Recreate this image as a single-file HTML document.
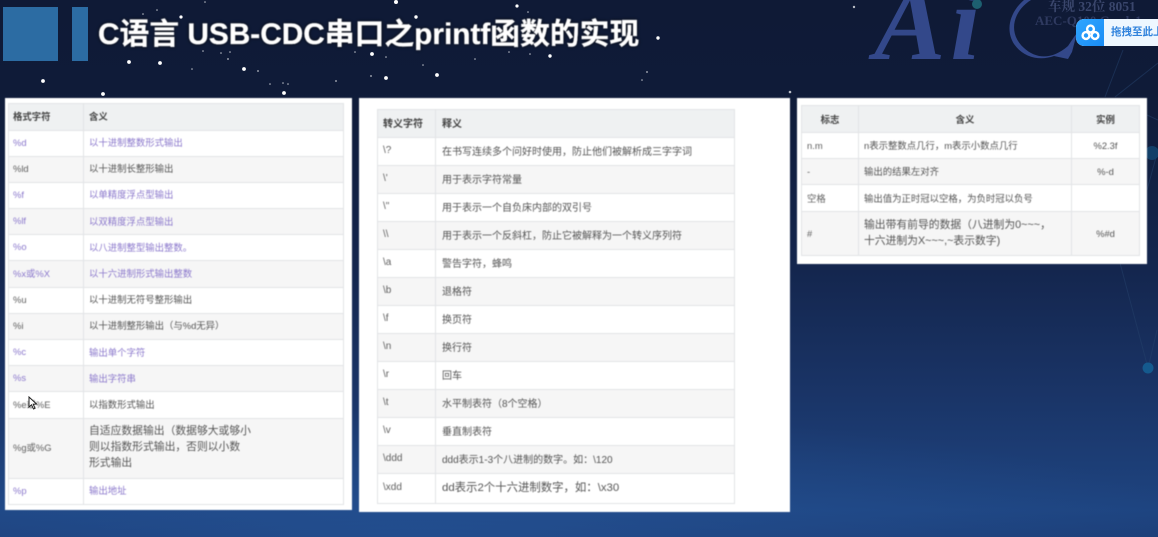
<!DOCTYPE html>
<html lang="zh">
<head>
<meta charset="utf-8">
<style>
html,body{margin:0;padding:0;width:1158px;height:537px;overflow:hidden;background:#101b38}
body{position:relative;font-family:"Liberation Sans","Noto Sans CJK SC",sans-serif}
.bg{position:absolute;left:0;top:0;width:1158px;height:537px;background:
radial-gradient(ellipse 800px 130px at 420px 540px,rgba(40,90,160,.55),rgba(40,90,160,0) 100%),
linear-gradient(180deg,#0f1a36 0,#0f1b38 90px,#14264e 270px,#1a3568 400px,#1e4480 510px,#1c3e78 537px)}
svg.deco{position:absolute;left:0;top:0}
.blk{position:absolute;background:#2c6ca3}
.title{position:absolute;left:98px;top:14px;font-size:29.8px;line-height:42px;font-weight:700;color:#fff;white-space:nowrap;text-shadow:0 0 3px #000;-webkit-text-stroke:.3px #fff;filter:blur(.4px)}
.panel{position:absolute;background:#fff;filter:blur(.5px)}
table{position:absolute;border-collapse:collapse;table-layout:fixed;color:#555;font-size:9.4px;background:#fff}
td,th{border:1px solid #e2e4e6;padding:0 0 0 5px;text-align:left;font-weight:400;overflow:hidden;white-space:nowrap}
th{background:#eff1f2;font-weight:700;color:#444}
tr:nth-child(odd) td{background:#f6f6f6}
tr:first-child th{background:#eff1f2}
.p,.p td{color:#8b78cc}
tr:nth-child(odd) td.p{color:#8b78cc}
#t1 tr.even td{background:#fff}
#t1 tr.odd td{background:#f6f6f6}
#t2 td:first-child,#t1 td:first-child,#t3 td:first-child{color:#5f5f5f}
#t1 td.p:first-child{color:#8b78cc}
#t1 td,#t1 th,#t2 td,#t2 th{padding-bottom:2px}
#t1 td:first-child,#t1 th:first-child{padding-left:4px}
#t1 td:nth-child(2),#t1 th:nth-child(2){padding-left:5.5px}
#t2 td:nth-child(2),#t2 th:nth-child(2){padding-left:6px}
.c{text-align:center;padding:0}
.widget{position:absolute;left:1076px;top:19px;width:120px;height:27px;background:#eef7ff;border-radius:8px;overflow:hidden;filter:blur(.3px)}
.widget i{position:absolute;left:0;top:0;width:28px;height:27px;background:linear-gradient(135deg,#30a6ff,#1a8cf5);border-radius:8px 0 0 8px}
.widget span{position:absolute;left:35px;top:6px;font-size:10.5px;line-height:15px;font-weight:700;color:#2f82dc;white-space:nowrap}
.lg{position:absolute;white-space:nowrap;font-family:"Liberation Serif","Noto Serif CJK SC",serif;font-weight:700}
</style>
</head>
<body>
<div class="bg"></div>

<svg class="deco" width="1158" height="537" viewBox="0 0 1158 537">
<g fill="#fff">
<circle cx="396" cy="2" r="2"/><circle cx="517" cy="6" r="1.6"/><circle cx="181" cy="17" r="1.6"/><circle cx="416" cy="17" r="1.7"/>
<circle cx="129" cy="62" r="1.9"/><circle cx="160" cy="63" r="1.9"/><circle cx="244" cy="69" r="1.9"/><circle cx="43" cy="81" r="1.9"/>
<circle cx="103" cy="94" r="1.9"/><circle cx="284" cy="93" r="1.9"/><circle cx="372" cy="54" r="1.9"/><circle cx="386" cy="78" r="1.9"/>
<circle cx="437" cy="75" r="1.9"/><circle cx="550" cy="56" r="1.7"/><circle cx="658" cy="38" r="1.7"/>
<g opacity=".7">
<circle cx="143" cy="14" r=".8"/><circle cx="157" cy="10" r=".8"/><circle cx="192" cy="69" r=".8"/><circle cx="258" cy="71" r=".9"/>
<circle cx="228" cy="59" r=".9"/><circle cx="203" cy="51" r=".8"/><circle cx="221" cy="53" r=".8"/><circle cx="230" cy="52" r=".8"/>
<circle cx="270" cy="84" r=".8"/><circle cx="283" cy="83" r=".8"/><circle cx="288" cy="84" r=".8"/><circle cx="336" cy="81" r=".9"/>
<circle cx="371" cy="76" r=".9"/><circle cx="423" cy="65" r=".8"/><circle cx="475" cy="59" r=".8"/><circle cx="509" cy="52" r=".8"/>
<circle cx="530" cy="54" r=".8"/><circle cx="647" cy="72" r=".9"/><circle cx="642" cy="80" r=".8"/><circle cx="528" cy="12" r=".8"/>
<circle cx="386" cy="57" r=".8"/><circle cx="355" cy="52" r=".8"/><circle cx="205" cy="2" r=".8"/><circle cx="854" cy="7" r="1.2"/><circle cx="790" cy="92" r="1.3"/>
</g>
</g>
<g stroke="#24406a" stroke-width="1" fill="none" opacity=".55">
<path d="M1123 50L1105 97"/><path d="M1158 63L1115 97"/>
<path d="M1120 263L1148 368"/><path d="M1157 330L1148 368"/>
<path d="M1147 115L1158 120"/><path d="M1147 190L1158 150"/>
</g>
<circle cx="1148" cy="368" r="5.5" fill="#155a8e"/>
<circle cx="1152" cy="153" r="7" fill="#123f68"/>
<circle cx="977" cy="4" r="5" fill="#1d5f70"/>
<path d="M1031 0C1012 12 1008 34 1024 48C1036 59 1052 60 1068 46L1074 37L1077 33L1072 52L1068 59L1054 56C1040 61 1024 58 1014 44C1004 28 1012 10 1024 0Z" fill="#33488a"/>
</svg>

<div class="lg" style="left:874px;top:-17px;font-size:107px;line-height:82px;font-style:italic;color:#33488a;letter-spacing:5px">Ai</div>
<div class="lg" style="left:1048px;top:-1px;font-size:13.5px;line-height:16px;color:#3a466c">车规 32位 8051</div>
<div class="lg" style="left:1035px;top:13px;font-size:13px;line-height:15px;color:#2f3a60">AEC-Q100 Grade1</div>

<div class="blk" style="left:3px;top:7px;width:55px;height:54px"></div>
<div class="blk" style="left:72px;top:7px;width:16px;height:54px"></div>
<div class="title">C语言 USB-CDC串口之printf函数的实现</div>

<div class="widget"><i></i>
<svg style="position:absolute;left:5px;top:4px" width="19" height="19" viewBox="0 0 19 19" fill="none" stroke="#fff" stroke-width="2.4"><circle cx="9.5" cy="6" r="3.4"/><circle cx="5" cy="12.5" r="3.4"/><circle cx="14" cy="12.5" r="3.4"/></svg>
<span>拖拽至此上传</span></div>

<!-- panel 1 -->
<div class="panel" style="left:5px;top:98px;width:347px;height:412px">
<table id="t1" style="left:3px;top:5px;width:336px">
<colgroup><col style="width:74.5px"><col></colgroup>
<tr style="height:26.5px"><th>格式字符</th><th>含义</th></tr>
<tr class="even" style="height:26.2px"><td class="p">%d</td><td class="p">以十进制整数形式输出</td></tr>
<tr class="odd" style="height:26.2px"><td>%ld</td><td>以十进制长整形输出</td></tr>
<tr class="even" style="height:26.2px"><td class="p">%f</td><td class="p">以单精度浮点型输出</td></tr>
<tr class="odd" style="height:26.2px"><td class="p">%lf</td><td class="p">以双精度浮点型输出</td></tr>
<tr class="even" style="height:26.2px"><td class="p">%o</td><td class="p">以八进制整型输出整数。</td></tr>
<tr class="odd" style="height:26.2px"><td class="p">%x或%X</td><td class="p">以十六进制形式输出整数</td></tr>
<tr class="even" style="height:26.2px"><td>%u</td><td>以十进制无符号整形输出</td></tr>
<tr class="odd" style="height:26.2px"><td>%i</td><td>以十进制整形输出（与%d无异）</td></tr>
<tr class="even" style="height:26.2px"><td class="p">%c</td><td class="p">输出单个字符</td></tr>
<tr class="odd" style="height:26.2px"><td class="p">%s</td><td class="p">输出字符串</td></tr>
<tr class="even" style="height:26.2px"><td>%e或%E</td><td>以指数形式输出</td></tr>
<tr class="odd" style="height:60px"><td>%g或%G</td><td style="font-size:10.8px;line-height:16px">自适应数据输出（数据够大或够小<br>则以指数形式输出，否则以小数<br>形式输出</td></tr>
<tr class="even" style="height:26.2px"><td class="p">%p</td><td class="p">输出地址</td></tr>
</table>
</div>

<!-- panel 2 -->
<div class="panel" style="left:359px;top:98px;width:431px;height:414px">
<table id="t2" style="left:18px;top:11px;width:358px;font-size:10px">
<colgroup><col style="width:58px"><col></colgroup>
<tr style="height:28px"><th>转义字符</th><th>释义</th></tr>
<tr style="height:28px"><td>\?</td><td>在书写连续多个问好时使用，防止他们被解析成三字字词</td></tr>
<tr style="height:28px"><td>\'</td><td>用于表示字符常量</td></tr>
<tr style="height:28px"><td>\"</td><td>用于表示一个自负床内部的双引号</td></tr>
<tr style="height:28px"><td>\\</td><td>用于表示一个反斜杠，防止它被解释为一个转义序列符</td></tr>
<tr style="height:28px"><td>\a</td><td>警告字符，蜂鸣</td></tr>
<tr style="height:28px"><td>\b</td><td>退格符</td></tr>
<tr style="height:28px"><td>\f</td><td>换页符</td></tr>
<tr style="height:28px"><td>\n</td><td>换行符</td></tr>
<tr style="height:28px"><td>\r</td><td>回车</td></tr>
<tr style="height:28px"><td>\t</td><td>水平制表符（8个空格）</td></tr>
<tr style="height:28px"><td>\v</td><td>垂直制表符</td></tr>
<tr style="height:28px"><td>\ddd</td><td>ddd表示1-3个八进制的数字。如：\120</td></tr>
<tr style="height:29.5px"><td>\xdd</td><td style="font-size:11.4px">dd表示2个十六进制数字，如：\x30</td></tr>
</table>
</div>

<!-- panel 3 -->
<div class="panel" style="left:797px;top:98px;width:350px;height:165.5px">
<table id="t3" style="left:4px;top:7px;width:339px">
<colgroup><col style="width:57px"><col style="width:213px"><col></colgroup>
<tr style="height:26.5px"><th class="c">标志</th><th class="c">含义</th><th class="c">实例</th></tr>
<tr style="height:26px"><td>n.m</td><td>n表示整数点几行，m表示小数点几行</td><td class="c">%2.3f</td></tr>
<tr style="height:26.5px"><td>-</td><td>输出的结果左对齐</td><td class="c">%-d</td></tr>
<tr style="height:26.5px"><td>空格</td><td>输出值为正时冠以空格，为负时冠以负号</td><td class="c"></td></tr>
<tr style="height:44.5px"><td>#</td><td style="font-size:10.8px;line-height:16px">输出带有前导的数据（八进制为0~~~，<br>十六进制为X~~~,~表示数字)</td><td class="c">%#d</td></tr>
</table>
</div>

<svg style="position:absolute;left:28px;top:396px" width="10" height="15" viewBox="0 0 10 15"><path d="M1 1L1 11L3.5 8.8L5.5 13L7 12.3L5.2 8.2L8.5 8Z" fill="#fff" stroke="#222" stroke-width="1"/></svg>
</body>
</html>
